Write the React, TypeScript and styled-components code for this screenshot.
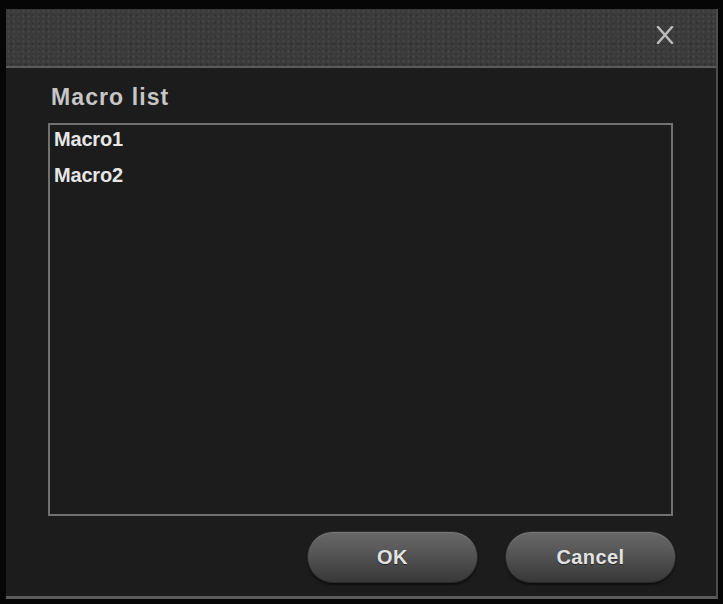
import React from "react";
import styled, { createGlobalStyle } from "styled-components";

const GlobalStyle = createGlobalStyle`
  html, body {
    margin: 0;
    padding: 0;
    background: #060606;
  }
  body {
    font-family: "Liberation Sans", Arial, sans-serif;
  }
`;

const Screen = styled.div`
  width: 723px;
  height: 604px;
  box-sizing: border-box;
  padding: 9px 5px 5px 6px;
  background: #060606;
`;

const Dialog = styled.div`
  width: 712px;
  height: 590px;
  box-sizing: border-box;
  display: flex;
  flex-direction: column;
  background: #1c1c1c;
  border-right: 2px solid #4c4c4c;
  border-bottom: 3px solid #5a5a5a;
`;

const TitleBar = styled.div`
  height: 59px;
  flex: none;
  box-sizing: border-box;
  display: flex;
  justify-content: flex-end;
  align-items: flex-start;
  padding: 16px 40px 0 0;
  background-color: #3a3a3a;
  background-image:
    radial-gradient(rgba(255, 255, 255, 0.05) 1px, transparent 1.5px),
    radial-gradient(rgba(0, 0, 0, 0.14) 1px, transparent 1.5px);
  background-size: 5px 5px, 7px 7px;
  background-position: 0 0, 2px 3px;
  border-bottom: 2px solid #5a5a5a;
`;

const CloseButton = styled.button`
  width: 22px;
  height: 20px;
  padding: 0;
  border: none;
  background: transparent;
  display: flex;
  align-items: center;
  justify-content: center;
  cursor: pointer;
`;

const Body = styled.div`
  flex: 1;
  display: flex;
  flex-direction: column;
  padding: 15px 40px 11px 42px;
`;

const Label = styled.div`
  font-size: 23px;
  line-height: 28px;
  font-weight: bold;
  letter-spacing: 1.1px;
  color: #c6c6c6;
  padding-left: 3px;
  margin-bottom: 12px;
`;

const List = styled.ul`
  list-style: none;
  margin: 0 3px 0 0;
  height: 393px;
  box-sizing: border-box;
  border: 2px solid #717171;
  padding: 2px 4px;
  display: flex;
  flex-direction: column;
  gap: 12px;
`;

const Item = styled.li`
  font-size: 20px;
  line-height: 24px;
  font-weight: bold;
  color: #e6e6e6;
  letter-spacing: -0.2px;
`;

const Footer = styled.div`
  display: flex;
  justify-content: flex-end;
  gap: 27px;
  margin-top: 15px;
`;

const PillButton = styled.button`
  width: 171px;
  height: 52px;
  border-radius: 26px;
  border: 1px solid #2a2a2a;
  background: linear-gradient(
    to bottom,
    #686868 0%,
    #595959 35%,
    #474747 70%,
    #383838 100%
  );
  box-shadow: inset 0 1px 0 rgba(255, 255, 255, 0.12),
    0 2px 2px rgba(0, 0, 0, 0.5);
  color: #e2e2e2;
  font-family: "Liberation Sans", Arial, sans-serif;
  font-size: 20px;
  font-weight: bold;
  letter-spacing: 0.4px;
  text-shadow: 0 1px 1px rgba(0, 0, 0, 0.5);
  cursor: pointer;
  padding: 0;
`;

export default function App() {
  return (
    <>
      <GlobalStyle />
      <Screen>
        <Dialog>
          <TitleBar>
            <CloseButton aria-label="Close">
              <svg width="20" height="18" viewBox="0 0 20 18">
                <path
                  d="M3 1 L17 17 M17 1 L3 17"
                  stroke="#bcbcbc"
                  strokeWidth="2.5"
                  strokeLinecap="round"
                />
              </svg>
            </CloseButton>
          </TitleBar>
          <Body>
            <Label>Macro list</Label>
            <List>
              <Item>Macro1</Item>
              <Item>Macro2</Item>
            </List>
            <Footer>
              <PillButton>OK</PillButton>
              <PillButton>Cancel</PillButton>
            </Footer>
          </Body>
        </Dialog>
      </Screen>
    </>
  );
}
